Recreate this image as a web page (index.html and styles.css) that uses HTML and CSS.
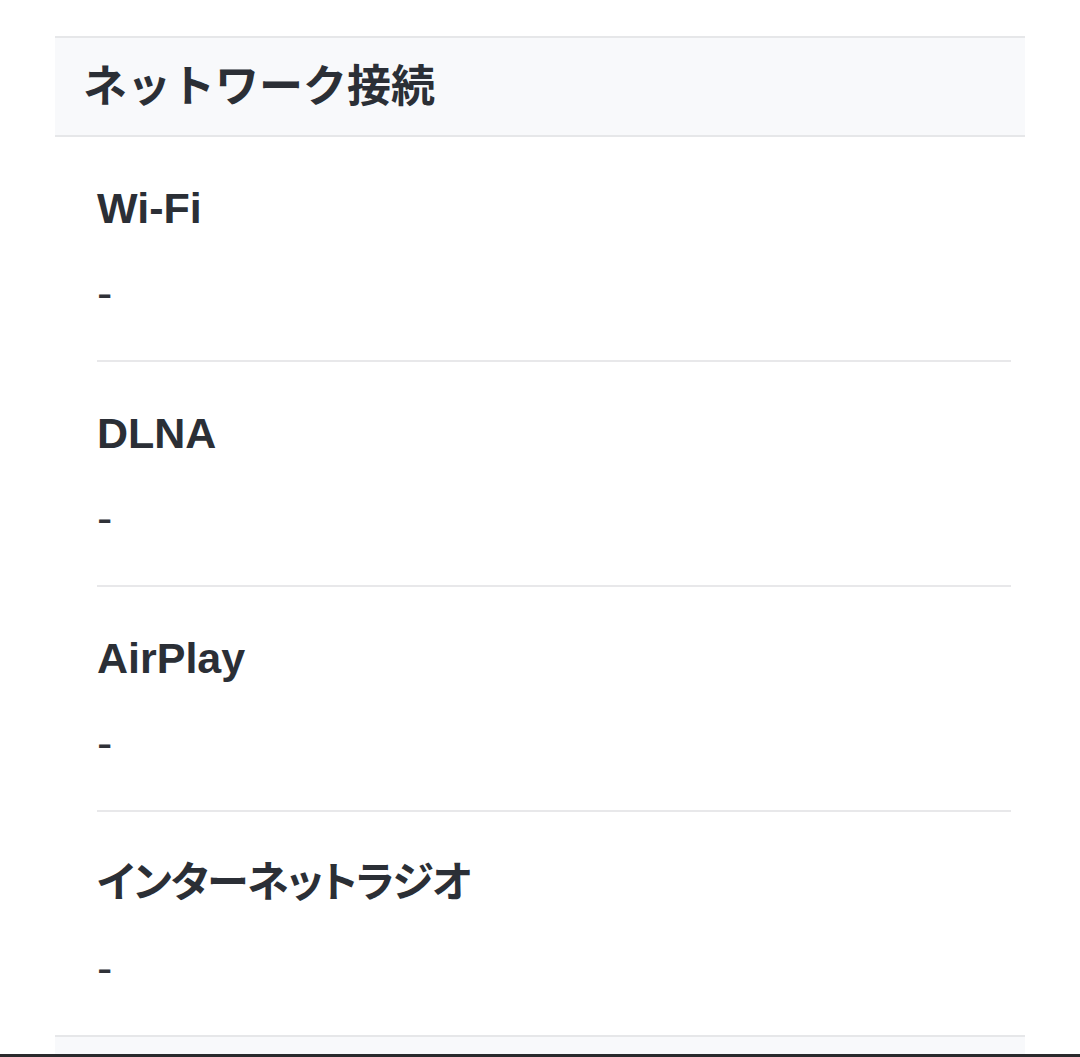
FILE: index.html
```html
<!DOCTYPE html>
<html lang="ja">
<head>
<meta charset="utf-8">
<link rel="stylesheet" href="styles.css">
</head>
<body>
<div class="viewport">
  <div class="page">
    <section class="section">
      <h2 class="section-title">ネットワーク接続</h2>
      <div class="item">
        <div class="label">Wi-Fi</div>
        <div class="value">-</div>
      </div>
      <div class="item">
        <div class="label">DLNA</div>
        <div class="value">-</div>
      </div>
      <div class="item">
        <div class="label">AirPlay</div>
        <div class="value">-</div>
      </div>
      <div class="item item-last">
        <div class="label label-jp">インターネットラジオ</div>
        <div class="value">-</div>
      </div>
    </section>
    <section class="section">
      <h2 class="section-title">&nbsp;</h2>
    </section>
  </div>
</div>
<div class="bottom-bar"></div>
</body>
</html>
```

FILE: styles.css
```css
html, body {
  margin: 0;
  padding: 0;
  background: #ffffff;
}
body {
  font-family: "Liberation Sans", "Noto Sans CJK JP", sans-serif;
  color: #2b2f36;
}
.viewport {
  height: 1054px;
  overflow: hidden;
}
.page {
  padding: 36px 55px 0 55px;
}
.section-title {
  margin: 0;
  height: 97px;
  line-height: 97px;
  padding-left: 28px;
  background: #f8f9fb;
  border-top: 2px solid #e6e7e9;
  border-bottom: 2px solid #e6e7e9;
  font-size: 44px;
  font-weight: 700;
}
.item {
  margin-left: 42px;
  margin-right: 14px;
  border-bottom: 2px solid #e8e8ea;
  padding: 45.5px 0 45px 0;
}
.item-last {
  border-bottom: none;
}
.label {
  font-size: 43px;
  line-height: 50px;
  font-weight: 700;
  font-feature-settings: "palt";
}
.label-jp {
  font-size: 42px;
  letter-spacing: -1.2px;
}
.value {
  margin-top: 39.5px;
  font-size: 46px;
  line-height: 43px;
  color: #303238;
}
.bottom-bar {
  height: 3px;
  background: #2a2a2c;
}
```
